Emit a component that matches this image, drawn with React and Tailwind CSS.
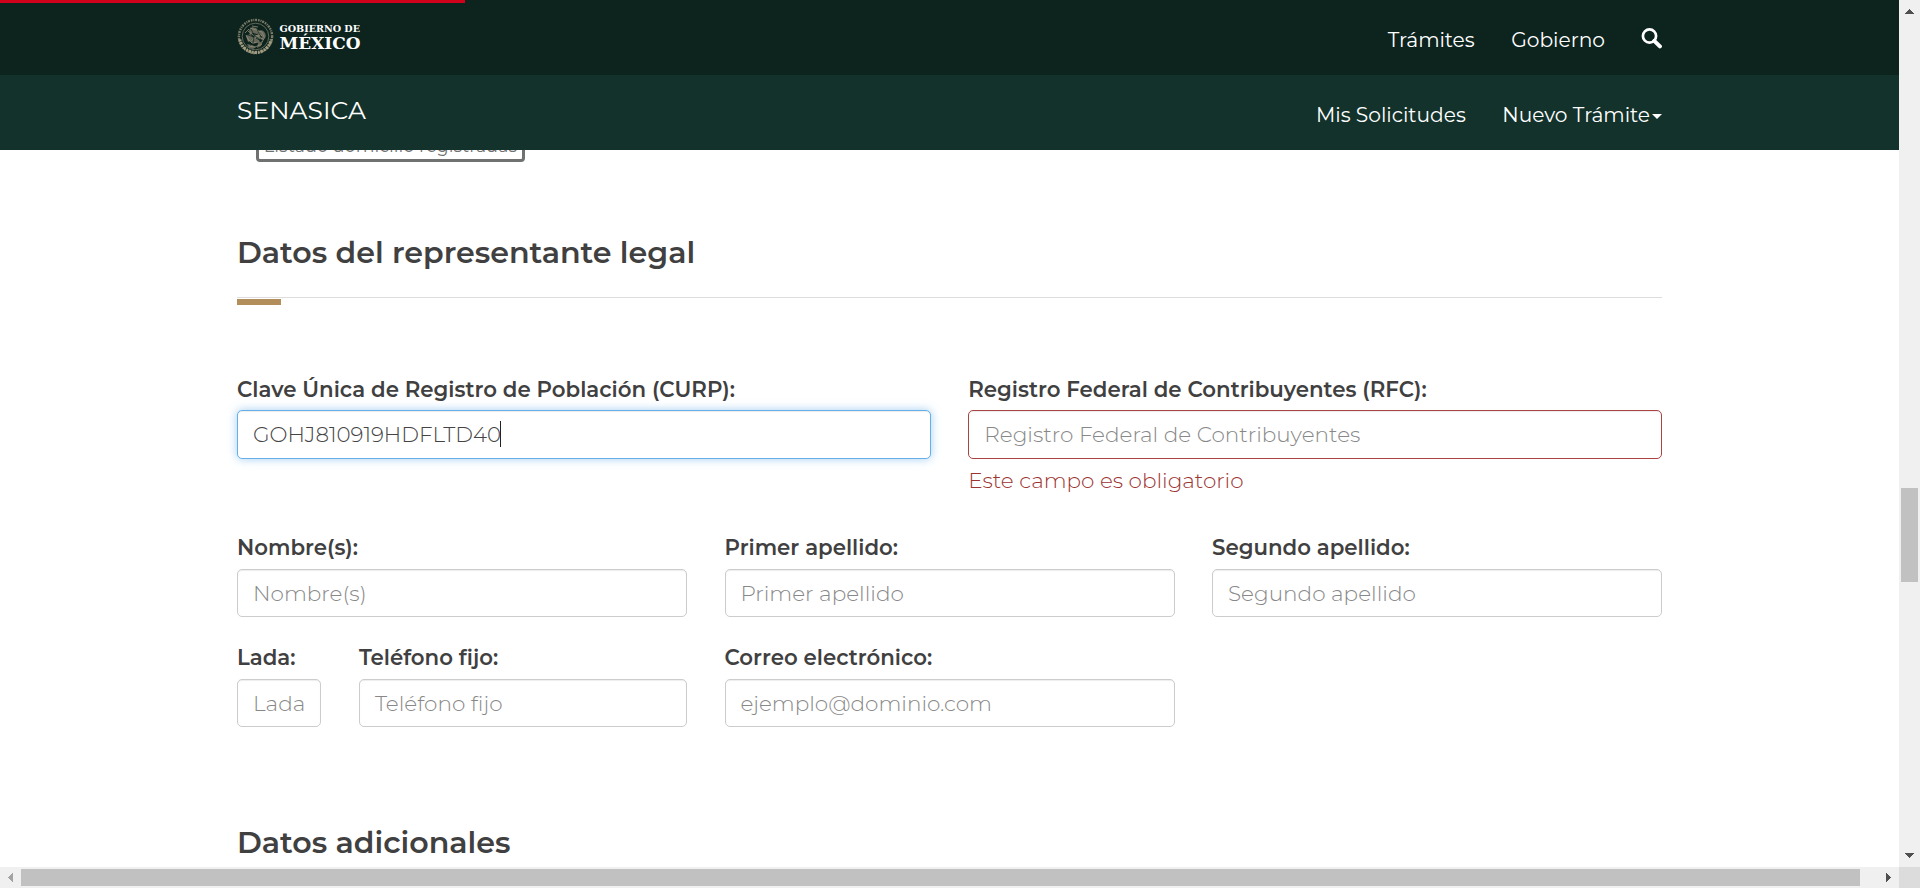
import React from "react";

const EAGLE = [
  "M12 12l3-3 4 1 3 3-2 3-4-1-3 2z",
  "M20 14c5-4 8-1 9 4l-3 4-3-1 2-3-4 1z",
  "M9 18l4-2 3 3-2 4-3 1z",
  "M15 20l5-3 3 3-1 4-5 2-3-2z",
  "M10 26l5 1 4 2-3 2-4-1z",
  "M21 25l5-2-2 5-4 2z",
];

function Seal() {
  return (
    <svg viewBox="0 0 37 37" className="size-[37px] shrink-0" fill="none">
      <circle cx="18.5" cy="18.5" r="16.6" stroke="#8d8b74" strokeWidth="2.4" strokeDasharray="1.6 0.9 1 0.8 2 1" opacity="0.85" />
      <path d="M2.8 21.5A16 16 0 0 0 34.2 21.5" stroke="#a39d80" strokeWidth="3" strokeDasharray="1.8 0.8 2.6 0.9" />
      <circle cx="18.5" cy="18.5" r="13.3" stroke="#6f705c" strokeWidth="0.9" />
      <g fill="#65685a">
        {EAGLE.map((d) => (
          <path key={d} d={d} />
        ))}
      </g>
      <g stroke="#8f8c74" strokeWidth="0.8">
        <path d="M11 13l5 4 7 1M13 10l6 2 6 6M10 20l5 5 8-1M14 23l6-5 6 3M12 28l6 1 7-3M21 13l4 1 2 5M9 17l3 6M15 8l6 1M8 15l4-4M25 24l3-5" />
      </g>
      <g stroke="#0c231e" strokeWidth="0.7">
        <path d="M14 11l3 6 6 5M20 12l5 8M11 17l6 2-1 6M19 20l5 3M13 27l8-2" />
      </g>
    </svg>
  );
}

function Wordmark() {
  return (
    <svg viewBox="0 0 84 34" className="h-[34px] w-[84px]" fill="#fff">
      <g style={{ fontFamily: "'DejaVu Serif', 'Noto Serif', serif", fontWeight: 700 }}>
        <text x="0.5" y="12" fontSize="9.4" textLength="80.5" lengthAdjust="spacingAndGlyphs">GOBIERNO DE</text>
        <text x="0.5" y="29" fontSize="16" textLength="81" lengthAdjust="spacingAndGlyphs">MÉXICO</text>
      </g>
    </svg>
  );
}

function Field({ label, placeholder, value, tone = "normal", tall, error, className = "" }) {
  const tones = {
    normal: "border-[#ccc] shadow-[inset_0_1px_1px_rgba(0,0,0,0.075)]",
    focus: "border-[#66afe9] shadow-[inset_0_1px_1px_rgba(0,0,0,0.075),0_0_10px_rgba(102,175,233,0.6)]",
    error: "border-[#a94442] shadow-[inset_0_1px_1px_rgba(0,0,0,0.075)]",
  };
  return (
    <div className={className}>
      <div className={`${tall ? "h-[30px] leading-[30px]" : "h-[31px] leading-[31px]"} mb-1.5 text-[21.3px] font-semibold whitespace-nowrap`}>
        {label}
      </div>
      <div className={`${tall ? "h-[49px]" : "h-12"} flex items-center rounded-[5px] border bg-white px-[15px] text-[21.55px] font-light whitespace-nowrap ${tones[tone]}`}>
        {value ? (
          <span className="flex items-center text-[21.4px] text-[#444]">
            {value}
            <span className="-ml-px h-[26px] w-px bg-[#222]" />
          </span>
        ) : (
          <span className="text-[#888]">{placeholder}</span>
        )}
      </div>
      {error && <div className="mt-1.5 h-[30px] text-[21.5px] leading-[30px] font-light text-[#9c3432]">{error}</div>}
    </div>
  );
}

function Arrow({ points, className = "" }) {
  return (
    <svg viewBox="0 0 21 21" className={`size-[21px] shrink-0 ${className}`} fill="currentColor" shapeRendering="crispEdges">
      <polygon points={points} />
    </svg>
  );
}

export default function App() {
  return (
    <div className="grid h-[888px] w-[1920px] grid-cols-[1899px_21px] grid-rows-[867px_21px] overflow-hidden bg-white font-['Montserrat','Open_Sans',sans-serif] text-[#404041] [font-variant-ligatures:none]">
      <div className="flex flex-col overflow-hidden">
        <header className="shrink-0 text-[20.2px] text-white">
          <div className="relative h-[75px] bg-[#0c231e]">
            <div className="absolute top-0 left-0 h-[3px] w-[465px] bg-[#d0021b]" />
            <div className="mx-auto flex w-[1425px] items-start justify-between">
              <div className="flex pt-[18px]">
                <Seal />
                <div className="pt-[2px] pl-[5px]"><Wordmark /></div>
              </div>
              <nav className="flex pt-[25px] leading-[30px] font-[450]">
                <span className="mr-[36.5px]">Trámites</span>
                <span className="mr-[36px]">Gobierno</span>
                <svg viewBox="0 0 21 21" className="mt-[3px] size-[21px]" fill="none" stroke="#fff">
                  <circle cx="8.5" cy="8" r="6.6" strokeWidth="2.7" />
                  <path d="M13.3 12.8l5.6 5.6" strokeWidth="4" strokeLinecap="round" />
                </svg>
              </nav>
            </div>
          </div>
          <div className="h-[75px] bg-[#13322b]">
            <div className="mx-auto flex w-[1425px] items-start justify-between">
              <div className="pt-5 text-[25px] leading-[30px] tracking-[0.05px]">SENASICA</div>
              <nav className="flex pt-[25px] leading-[30px] font-[450]">
                <span className="mr-[36.5px]">Mis Solicitudes</span>
                <span>Nuevo Trámite</span>
                <svg viewBox="0 0 10 5" className="mt-[14px] ml-0.5 h-[5px] w-2.5" fill="#fff">
                  <path d="M0 0h10L5 5z" />
                </svg>
              </nav>
            </div>
          </div>
        </header>

        <main className="flex-1 overflow-hidden">
          <div className="mx-auto w-[1425px]">
            <div className="-mt-[21px] ml-[19px] flex h-[33px] w-[269px] items-center justify-center rounded-[4px] border-3 border-[#6f7271] pt-[2px] text-[17.7px] whitespace-nowrap text-[#6f7271]">
              Listado domicilio registradas
            </div>

            <h3 className="relative mt-[72px] h-16 border-b border-[#ddd] pt-px text-[30.1px] leading-9 font-semibold">
              Datos del representante legal
              <span className="absolute top-[65px] left-0 h-1.5 w-11 bg-[#b38e5d]" />
            </h3>

            <div className="mt-[76px] grid grid-cols-2 gap-x-[37.5px]">
              <Field tall tone="focus" label="Clave Única de Registro de Población (CURP):" value="GOHJ810919HDFLTD40" />
              <Field tall tone="error" label="Registro Federal de Contribuyentes (RFC):" placeholder="Registro Federal de Contribuyentes" error="Este campo es obligatorio" />
            </div>

            <div className="mt-[37px] grid grid-cols-12 gap-x-[37.5px] gap-y-[25px]">
              <Field className="col-span-4" label="Nombre(s):" placeholder="Nombre(s)" />
              <Field className="col-span-4" label="Primer apellido:" placeholder="Primer apellido" />
              <Field className="col-span-4" label="Segundo apellido:" placeholder="Segundo apellido" />
              <Field className="col-span-1" label="Lada:" placeholder="Lada" />
              <Field className="col-span-3" label="Teléfono fijo:" placeholder="Teléfono fijo" />
              <Field className="col-span-4" label="Correo electrónico:" placeholder="ejemplo@dominio.com" />
            </div>

            <h3 className="mt-[98px] text-[30.1px] leading-9 font-semibold">Datos adicionales</h3>
          </div>
        </main>
      </div>

      <div className="flex flex-col items-center bg-[#f0f0f0] text-[#505050]">
        <Arrow points="6,14 15,14 10.5,9" />
        <div className="mt-[467px] h-[94px] w-[17px] bg-[#c1c1c1]" />
        <Arrow points="6,7 15,7 10.5,12" className="mt-auto" />
      </div>

      <div className="flex items-center bg-[#f0f0f0]">
        <Arrow points="13,6 13,15 8,10.5" className="text-[#a3a3a3]" />
        <div className="h-[17px] w-[1839px] bg-[#c1c1c1]" />
        <Arrow points="8,6 8,15 13,10.5" className="ml-auto text-[#505050]" />
      </div>
      <div className="bg-[#dcdcdc]" />
    </div>
  );
}
